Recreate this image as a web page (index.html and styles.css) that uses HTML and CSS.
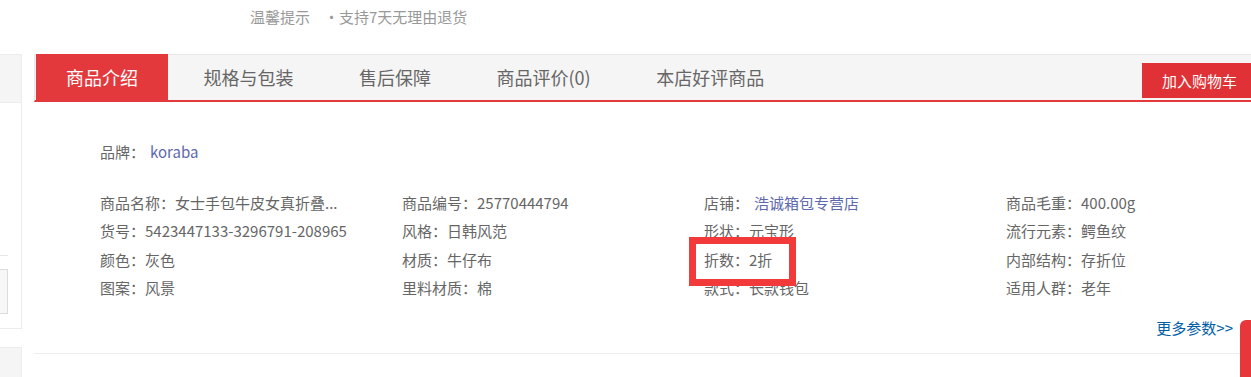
FILE: index.html
```html
<!DOCTYPE html>
<html lang="zh-CN">
<head>
<meta charset="utf-8">
<title>商品介绍</title>
<link rel="stylesheet" href="styles.css">
</head>
<body>
<div class="page">
  <div class="topbar">
    <span class="tip-title">温馨提示</span>
    <span class="tip-item">·支持7天无理由退货</span>
  </div>
  <div class="main-row">
    <aside class="sidebar">
      <div class="side-box">
        <div class="side-head"></div>
        <div class="side-body">
          <div class="side-line"></div>
          <div class="side-input"></div>
        </div>
      </div>
      <div class="side-box2"></div>
    </aside>
    <section class="detail">
      <div class="tabbar">
        <div class="tab active">商品介绍</div>
        <div class="tab">规格与包装</div>
        <div class="tab">售后保障</div>
        <div class="tab">商品评价(0)</div>
        <div class="tab">本店好评商品</div>
        <div class="cart-btn">加入购物车</div>
      </div>
      <div class="params">
        <div class="brand">品牌：<a class="link">koraba</a></div>
        <ul class="grid">
          <li>商品名称：女士手包牛皮女真折叠...</li>
          <li>商品编号：25770444794</li>
          <li>店铺：<a class="link">浩诚箱包专营店</a></li>
          <li>商品毛重：400.00g</li>
          <li>货号：5423447133-3296791-208965</li>
          <li>风格：日韩风范</li>
          <li>形状：元宝形</li>
          <li>流行元素：鳄鱼纹</li>
          <li>颜色：灰色</li>
          <li>材质：牛仔布</li>
          <li class="marked">折数：2折<span class="highlight"></span></li>
          <li>内部结构：存折位</li>
          <li>图案：风景</li>
          <li>里料材质：棉</li>
          <li>款式：长款钱包</li>
          <li>适用人群：老年</li>
        </ul>
        <div class="more-row"><a class="more">更多参数&gt;&gt;</a></div>
      </div>
    </section>
  </div>
  <div class="float-tab"></div>
</div>
</body>
</html>
```
FILE: styles.css
```css
* { box-sizing: border-box; }
html, body { margin: 0; padding: 0; background: #fff; }
body {
  font-family: "Noto Sans CJK SC", "Noto Sans", sans-serif;
  font-size: 15px;
  color: #666;
  overflow: hidden;
}
.page { position: relative; width: 1251px; height: 377px; overflow: hidden; }

.topbar {
  height: 54px;
  padding-left: 250px;
  padding-top: 6px;
  line-height: 22px;
  color: #999;
  display: flex;
  gap: 14px;
}

.main-row { display: flex; }

.sidebar { width: 22px; margin-right: 12px; flex: none; }
.side-box {
  height: 275px;
  border: 1px solid #ececec;
  border-left: none;
}
.side-head { height: 48px; background: #f5f5f5; border-bottom: 1px solid #ececec; }
.side-body { padding-top: 152px; }
.side-line { width: 8px; border-top: 1px solid #e8e8e8; }
.side-input {
  margin-top: 13px;
  width: 8px;
  height: 45px;
  background: #f7f7f7;
  border: 1px solid #dcdcdc;
  border-left: none;
}
.side-box2 {
  margin-top: 18px;
  height: 40px;
  background: #f5f5f5;
  border: 1px solid #ececec;
  border-left: none;
}

.detail { flex: 1; min-width: 0; }

.tabbar {
  display: flex;
  height: 48px;
  background: #f5f5f5;
  border-top: 1px solid #e8e8e8;
  border-left: 1px solid #e8e8e8;
  border-bottom: 2px solid #e4393c;
  padding-left: 1px;
}
.tab {
  height: 46px;
  margin-top: -1px;
  padding: 0 30px;
  margin-right: 5.5px;
  font-size: 18px;
  line-height: 46px;
  color: #666;
  white-space: nowrap;
}
.tab.active { background: #e4393c; color: #fff; }
.cart-btn {
  margin-left: auto;
  margin-top: 8px;
  width: 109px;
  height: 35px;
  padding-left: 20px;
  background: #e03236;
  color: #fff;
  font-size: 15px;
  line-height: 35px;
  white-space: nowrap;
  overflow: hidden;
}

.params { padding: 40px 18px 0 66px; border-bottom: 1px solid #eee; height: 252px; }
.brand { line-height: 20px; }
.link { color: #5e69ad; margin-left: 5px; }
.grid {
  list-style: none;
  margin: 27px 0 0;
  padding: 0;
  display: grid;
  grid-template-columns: repeat(4, 302px);
  line-height: 28.4px;
}
.grid li { white-space: nowrap; }
.marked { position: relative; }
.highlight {
  position: absolute;
  left: -15px;
  top: -9px;
  width: 107px;
  height: 49px;
  border: 7px solid #f33a3a;
}
.more-row { display: flex; justify-content: flex-end; margin-top: 15px; line-height: 20px; }
.more { color: #005ea7; }

.float-tab {
  position: absolute;
  right: 0;
  top: 320px;
  width: 11px;
  height: 57px;
  background: #e8373b;
  border-top-left-radius: 6px;
}
```
